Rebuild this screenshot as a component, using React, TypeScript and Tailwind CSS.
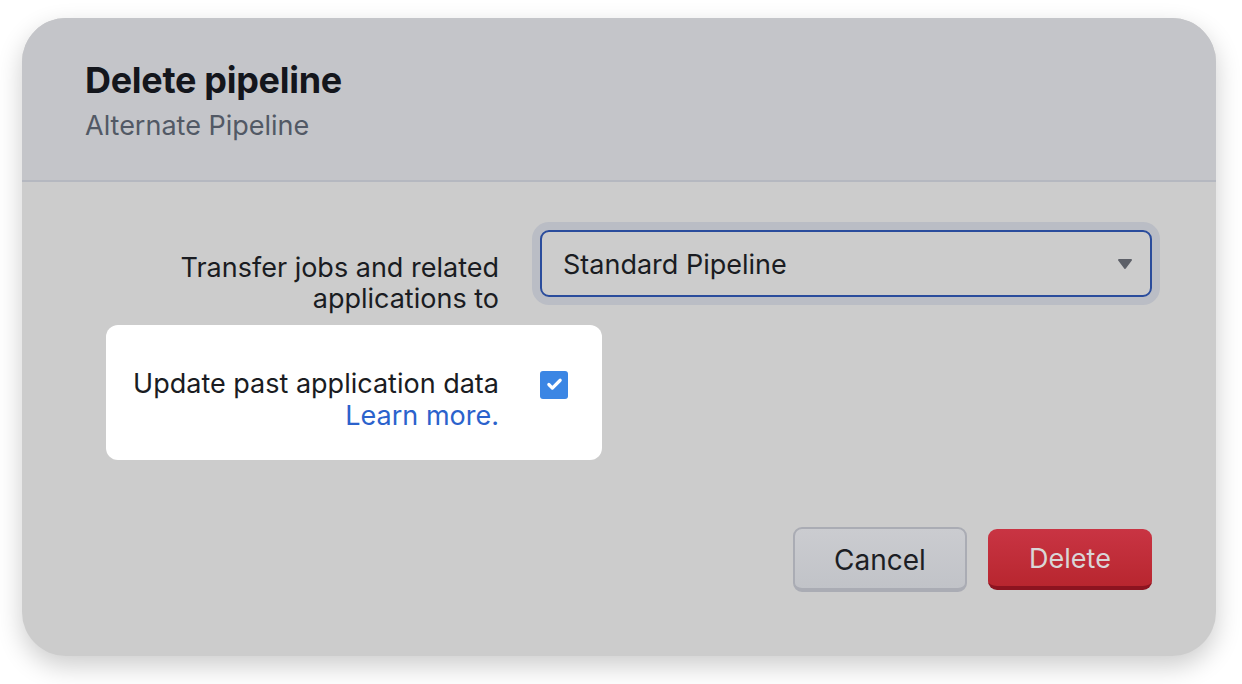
import { Check } from "lucide-react";

const font = { fontFamily: "Inter, 'Noto Sans', sans-serif" };

export default function App() {
  return (
    <div className="min-h-screen bg-white pt-[18px] pb-[28px] pl-[22px] pr-[26px]" style={font}>
      <div className="flex h-[638px] flex-col overflow-hidden rounded-[44px] bg-[#cccccc] shadow-[0_10px_26px_rgba(0,0,0,0.2)]">
        {/* header */}
        <div className="h-[164px] shrink-0 border-b-2 border-[#b5b8c0] bg-[#c4c5c9] pl-[63px] pt-[40px]">
          <h1 className="text-[36px] font-bold leading-[44px] tracking-[-0.3px] text-[#14161c]">
            Delete pipeline
          </h1>
          <p className="mt-[7px] text-[27px] leading-[34px] text-[#525965]">
            Alternate Pipeline
          </p>
        </div>

        {/* body */}
        <div className="flex flex-1 flex-col pt-[48px] pr-[64px]">
          <div className="flex h-[95px] items-start">
            <div className="w-[477px] shrink-0 pt-[22px] text-right text-[27px] leading-[31px] text-[#1a1c22]">
              Transfer jobs and related
              <br />
              applications to
            </div>
            <div className="ml-[41px] flex h-[67px] flex-1 items-center justify-between rounded-[9px] border-2 border-[#2a4c9c] pl-[21px] pr-[17px] shadow-[0_0_0_8px_#babdc5]">
              <span className="pt-[3px] text-[27px] text-[#1a1c22]">Standard Pipeline</span>
              <svg width="16" height="12" viewBox="0 0 16 12">
                <path d="M2 2h12l-6 8z" fill="#5d6068" stroke="#5d6068" strokeWidth="2" strokeLinejoin="round" />
              </svg>
            </div>
          </div>

          <div className="ml-[84px] flex h-[135px] w-[496px] items-center rounded-[12px] bg-white">
            <div className="w-[393px] shrink-0 pt-[14px] text-right text-[27px] leading-[32px]">
              <div className="text-[#1a1c22]">Update past application data</div>
              <a className="text-[#2b62cc]">Learn more.</a>
            </div>
            <div className="mb-[16px] ml-[41px] flex h-[28px] w-[28px] items-center justify-center rounded-[3px] bg-[#3b86e4]">
              <Check size={17} strokeWidth={4.5} className="text-white" />
            </div>
          </div>

          <div className="mt-[67px] flex items-center justify-end gap-[21px]">
            <button
              type="button"
              className="h-[65px] w-[174px] rounded-[9px] border-2 border-b-[4px] border-[#aaacb4] bg-gradient-to-b from-[#cbccd0] to-[#c1c3c8] pt-[2px] text-[28px] text-[#1c1e24]"
            >
              Cancel
            </button>
            <button
              type="button"
              className="h-[61px] w-[164px] rounded-[9px] border-b-[4px] border-[#8c1420] bg-gradient-to-b from-[#c93443] to-[#b8262f] pt-[3px] text-[27px] text-[#d9d6d7]"
            >
              Delete
            </button>
          </div>
        </div>
      </div>
    </div>
  );
}
